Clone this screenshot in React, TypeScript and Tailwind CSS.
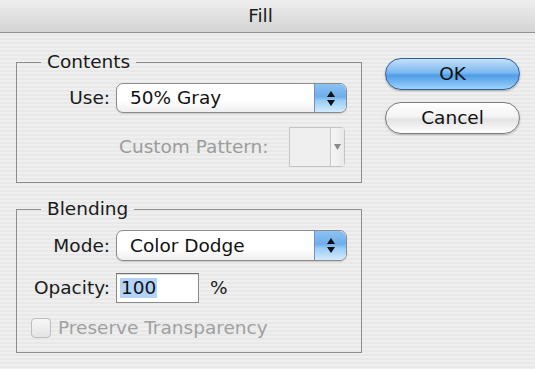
const font = "font-['DejaVu_Sans',sans-serif]";

function Stepper() {
  return (
    <div className="flex h-full w-[32px] flex-col items-center justify-center gap-[3px] rounded-r-[6px] border-l border-[#6f93c0] bg-[linear-gradient(to_bottom,#8cc2f2_0%,#6eaeeb_45%,#9bcdf6_60%,#d2ebfd_100%)]">
      <svg width="8" height="6" viewBox="0 0 8 6">
        <path d="M4 0 L8 6 L0 6 Z" fill="#111" />
      </svg>
      <svg width="8" height="6" viewBox="0 0 8 6">
        <path d="M0 0 L8 0 L4 6 Z" fill="#111" />
      </svg>
    </div>
  );
}

function PopupSelect({ value, h }: { value: string; h: string }) {
  return (
    <div
      className={`flex ${h} w-[231px] items-center overflow-hidden rounded-[7px] border border-[#8c8c8c] bg-[linear-gradient(to_bottom,#ffffff_0%,#ffffff_60%,#eeeeee_100%)] shadow-[0_1px_1px_rgba(0,0,0,0.15)]`}
    >
      <span className="flex-1 pl-[13px] text-[#111]">{value}</span>
      <Stepper />
    </div>
  );
}

export default function App() {
  return (
    <div
      className={`${font} flex h-[369px] w-[535px] flex-col overflow-hidden bg-[repeating-linear-gradient(to_bottom,#efefef_0px,#efefef_2px,#e8e8e8_2px,#e8e8e8_4px)] text-[18.5px] leading-[20px] text-[#1a1a1a]`}
    >
      {/* title bar */}
      <div className="flex h-[33px] items-center justify-center border-b border-[#8f8f8f] bg-[linear-gradient(to_bottom,#eeeeee,#d4d4d4)] pr-[14px] text-[#1c1c1c]">
        Fill
      </div>

      <div className="flex pl-[16px] pt-[19px]">
        {/* left column */}
        <div className="flex w-[346px] flex-col">
          <fieldset className="border border-[#8d8d8d]">
            <legend className="ml-[24px] px-[6px]">Contents</legend>
            <div className="flex flex-col pb-[15px] pt-[11px]">
              <div className="flex items-center gap-[6px]">
                <span className="w-[93px] text-right">Use:</span>
                <PopupSelect value="50% Gray" h="h-[30px]" />
              </div>
              <div className="mt-[14px] flex h-[40px] items-center">
                <span className="pl-[102px] text-[#9c9c9c]">Custom Pattern:</span>
                <div className="ml-auto mr-[16px] flex h-[40px] w-[56px] rounded-r-[4px] border border-[#c4c4c4] bg-[#efefef]">
                  <div className="w-[41px] border-r border-[#c8c8c8]" />
                  <div className="flex flex-1 items-center justify-center bg-[linear-gradient(to_right,#f6f6f6,#e9e9e9)]">
                    <svg width="7" height="6" viewBox="0 0 7 6">
                      <path d="M0 0 L7 0 L3.5 6 Z" fill="#8a8a8a" />
                    </svg>
                  </div>
                </div>
              </div>
            </div>
          </fieldset>

          <fieldset className="mt-[16px] border border-[#8d8d8d]">
            <legend className="ml-[24px] px-[6px]">Blending</legend>
            <div className="flex flex-col pb-[14px] pt-[11px]">
              <div className="flex items-center gap-[6px]">
                <span className="w-[93px] text-right">Mode:</span>
                <PopupSelect value="Color Dodge" h="h-[31px]" />
              </div>
              <div className="mt-[12px] flex h-[30px] items-center gap-[6px]">
                <span className="w-[93px] text-right">Opacity:</span>
                <div className="flex h-[30px] w-[83px] items-center border border-[#8a8a8a] border-t-[#6f6f6f] bg-white pl-[3px] shadow-[inset_0_1px_1px_rgba(0,0,0,0.15)]">
                  <span className="bg-[#b3d3fb] px-[1px] text-[#111]">100</span>
                </div>
                <span className="ml-[5px]">%</span>
              </div>
              <div className="mt-[15px] flex h-[20px] items-center">
                <div className="ml-[14px] h-[20px] w-[20px] rounded-[4px] border border-[#bdbdbd] bg-[linear-gradient(to_bottom,#f7f7f7,#e4e4e4)]" />
                <span className="ml-[7px] text-[#a0a0a0]">Preserve Transparency</span>
              </div>
            </div>
          </fieldset>
        </div>

        {/* buttons */}
        <div className="ml-[23px] mt-[6px] flex w-[135px] flex-col gap-[12px]">
          <button className="flex h-[32px] items-center justify-center rounded-full border border-[#30609e] bg-[linear-gradient(to_bottom,#c4e0fa_0%,#7db9f0_45%,#4f9de8_55%,#9fd2fb_100%)] text-[#111] shadow-[0_1px_2px_rgba(0,0,0,0.3)]">
            OK
          </button>
          <button className="flex h-[32px] items-center justify-center rounded-full border border-[#7d7d7d] bg-[linear-gradient(to_bottom,#ffffff_0%,#f4f4f4_45%,#e3e3e3_55%,#ffffff_100%)] text-[#111] shadow-[0_1px_2px_rgba(0,0,0,0.25)]">
            Cancel
          </button>
        </div>
      </div>
    </div>
  );
}
